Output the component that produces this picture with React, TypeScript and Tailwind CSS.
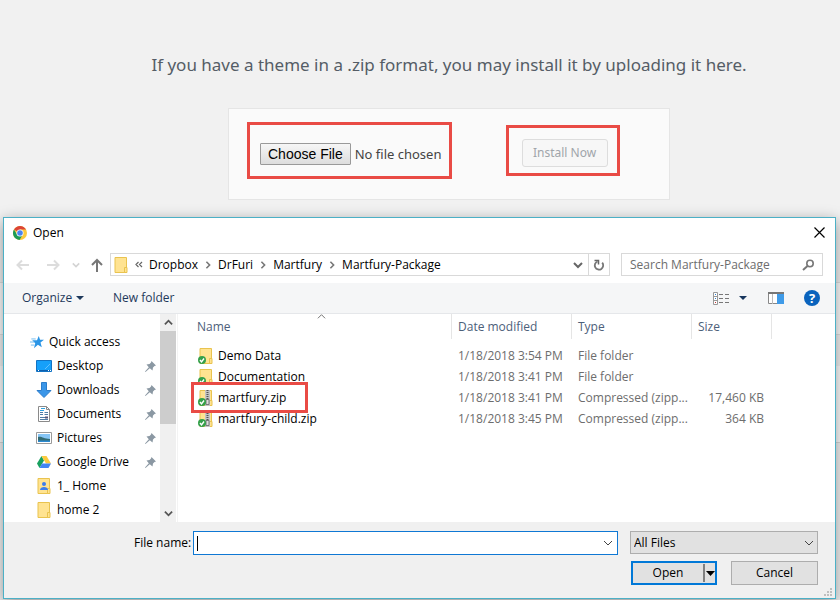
import React from "react";

const folderIcon = (
  <>
    <path d="M2 0.500h11.500v15H2z" fill="#ffe391" stroke="#e9c34f" />
    <path d="M11.500 15.500v-5h2.500v5z" fill="#ffe391" stroke="#e9c34f" />
  </>
);

function Folder({ person, badge, zip }: { person?: boolean; badge?: boolean; zip?: boolean }) {
  return (
    <svg width="16" height="16" viewBox="0 0 16 16" className="shrink-0" aria-hidden="true">
      {folderIcon}
      {person && (
        <g fill="#3b7ded">
          <circle cx="8" cy="6" r="2" />
          <path d="M4 12c0-4 8-4 8 0z" />
        </g>
      )}
      {zip && (
        <g>
          <path d="M7 0h5v16H7z" fill="#c4c4c4" />
          <path d="M9.500 0v9" stroke="#555" strokeWidth="2" strokeDasharray="1 1" />
          <path d="M8 9.500h3v5H8z" fill="#ddd" stroke="#777" />
        </g>
      )}
      {badge && (
        <g>
          <circle cx="4" cy="12" r="4" fill="#35a04a" />
          <path d="M2 12l1.500 1.800L6 10.500" fill="none" stroke="#fff" strokeWidth="1.400" />
        </g>
      )}
    </svg>
  );
}

function Chevron({ dir = "down", color = "#555", size = 9, weight = 1.5 }: { dir?: string; color?: string; size?: number; weight?: number }) {
  const d = dir === "down" ? "M1 3l4 4 4-4" : dir === "up" ? "M1 7l4-4 4 4" : "M3 1l4 4-4 4";
  return (
    <svg width={size} height={size} viewBox="0 0 10 10" className="shrink-0" aria-hidden="true">
      <path d={d} fill="none" stroke={color} strokeWidth={weight} />
    </svg>
  );
}

function Arrow({ d, color }: { d: string; color: string }) {
  return (
    <svg width="14" height="14" viewBox="0 0 14 14" aria-hidden="true">
      <path d={d} fill="none" stroke={color} strokeWidth="2" />
    </svg>
  );
}

function Pin() {
  return (
    <svg width="11" height="11" viewBox="0 0 11 11" className="shrink-0" aria-hidden="true">
      <path d="M6.500 0L11 4.500 9.500 5 8 6.500 7.500 9.500 4.800 7.200 0.500 11 0 10.500 3.800 6.200 1.500 3.500 4.500 3 6 1.500z" fill="#8b98a3" />
    </svg>
  );
}

const icons = {
  star: (
    <svg width="14" height="14" viewBox="0 0 16 16" aria-hidden="true">
      <path d="M10 1l1.500 4.500H16l-4 3 1.500 5.500-4.500-3-4.500 4 1.500-5.500L2.500 6H8z" fill="#2a95e6" />
      <path d="M1.500 4.500h5M0 8h5M1 11.500h4" stroke="#5fb4f0" />
    </svg>
  ),
  desktop: (
    <svg width="16" height="16" viewBox="0 0 16 16" aria-hidden="true">
      <path d="M0.500 2.500h15v11h-15z" fill="#16a0fa" stroke="#1273c4" />
      <path d="M1 12.500h14" stroke="#0c5fae" />
      <path d="M2 12.500h1M12 12.500h1M14 12.500h1" stroke="#fff" />
      <path d="M9 11l5-5" stroke="#62c0ff" />
    </svg>
  ),
  download: (
    <svg width="16" height="16" viewBox="0 0 16 16" aria-hidden="true">
      <path d="M5.500 0.500h5v8h4.500L8 15.500 1 8.500h4.500z" fill="#3b96e8" stroke="#2c7dcb" />
    </svg>
  ),
  document: (
    <svg width="16" height="16" viewBox="0 0 16 16" aria-hidden="true">
      <path d="M2.500 0.500h8l3 3v12h-11z" fill="#fff" stroke="#8a8a8a" />
      <path d="M10.500 0.500v3h3" fill="none" stroke="#8a8a8a" />
      <path d="M4 6.500h3M4 8.500h3M8.500 6.500h3.500M8.500 8.500h3.500M4 11.500h5M4 13.500h8" stroke="#4f7da5" />
      <path d="M5 2.500h4M4 4.500h4" stroke="#2da0e0" />
      <path d="M9 10.500h3v2H9z" fill="#557" />
    </svg>
  ),
  picture: (
    <svg width="16" height="16" viewBox="0 0 16 16" aria-hidden="true">
      <path d="M0.500 2.500h15v11h-15z" fill="#fff" stroke="#9a9a9a" />
      <path d="M2 4h12v8H2z" fill="#86c5f5" />
      <path d="M2 7c4-1 5 2 12 2v3H2z" fill="#336b73" />
      <path d="M2 10.500h12V12H2z" fill="#2c8ad0" />
    </svg>
  ),
  drive: (
    <svg width="16" height="16" viewBox="0 0 16 16" aria-hidden="true">
      <path d="M5.500 2L8 6.500 3.500 14 1 9.500z" fill="#18a15f" />
      <path d="M5.500 2h5L15 9.500h-5z" fill="#fcca3e" />
      <path d="M6 9.500h9L12.500 14h-9z" fill="#4285f4" />
    </svg>
  ),
};

const places = [
  { label: "Desktop", icon: icons.desktop, pinned: true },
  { label: "Downloads", icon: icons.download, pinned: true },
  { label: "Documents", icon: icons.document, pinned: true },
  { label: "Pictures", icon: icons.picture, pinned: true },
  { label: "Google Drive", icon: icons.drive, pinned: true },
  { label: "1_ Home", icon: <Folder person />, pinned: false },
  { label: "home 2", icon: <Folder />, pinned: false },
];

const files = [
  { name: "Demo Data", date: "1/18/2018 3:54 PM", type: "File folder", size: "", zip: false },
  { name: "Documentation", date: "1/18/2018 3:41 PM", type: "File folder", size: "", zip: false },
  { name: "martfury.zip", date: "1/18/2018 3:41 PM", type: "Compressed (zipp...", size: "17,460 KB", zip: true },
  { name: "martfury-child.zip", date: "1/18/2018 3:45 PM", type: "Compressed (zipp...", size: "364 KB", zip: true },
];

function UploadPage() {
  return (
    <main className="pt-[50px]">
      <div className="flex flex-col items-center pl-[58px]">
        <p className="font-['Noto_Sans',sans-serif] text-[17px] leading-[30px] whitespace-nowrap text-[#555d66]">
          If you have a theme in a .zip format, you may install it by uploading it here.
        </p>
        <form className="mt-7 flex h-[92px] w-[442px] items-start justify-between border border-[#e5e5e5] bg-[#fafafa] pt-[13px] pr-[49px] pl-[18px]">
          <div className="flex h-[57px] w-[205px] items-center border-3 border-[#e94b45] pt-[6px] pl-[10px]">
            <input
              type="file"
              aria-label="Theme zip file"
              className="w-full font-['Noto_Sans',sans-serif] text-[13px] leading-[22px] text-[#444] file:mr-1 file:h-[22px] file:rounded-[1px] file:border file:border-solid file:border-[#999] file:bg-linear-to-b file:from-[#f6f6f6] file:to-[#dddddd] file:px-[7px] file:font-['Liberation_Sans',sans-serif] file:text-[14px] file:leading-[20px] file:text-black"
            />
          </div>
          <div className="mt-[3px] flex h-[51px] w-[114px] items-center justify-center border-3 border-[#e94b45] pt-1 pl-[3px]">
            <button type="button" disabled className="h-7 w-[86px] rounded-[3px] border border-[#ddd] bg-[#f7f7f7] font-['Noto_Sans',sans-serif] text-[12px] whitespace-nowrap text-[#a0a5aa]">
              Install Now
            </button>
          </div>
        </form>
      </div>
      <div className="mt-[82px] h-[53px] border-y border-[#e0e0e0] bg-[#fcfcfc]" />
      <div className="mt-[31px] h-[77px] border-b border-[#d8d8d8] bg-[#fcfcfc]" />
    </main>
  );
}

function ChromeLogo() {
  return (
    <svg width="14" height="14" viewBox="0 0 14 14" aria-hidden="true">
      <circle cx="7" cy="7" r="7" fill="#fbc93d" />
      <path d="M7 7L1 3.400A7 7 0 0 1 13.100 3.600L7 3.600z" fill="#dc4437" />
      <path d="M1 3.400A7 7 0 0 0 6.500 14L9.800 8.800 4 8.500z" fill="#1b9b57" />
      <circle cx="7" cy="7" r="3.500" fill="#fff" />
      <circle cx="7" cy="7" r="2.800" fill="#4a84ee" />
    </svg>
  );
}

function NavRow() {
  return (
    <div className="flex h-[23px] items-center pr-[12px] pl-[12px]">
      <button type="button" aria-label="Back" className="w-[30px]"><Arrow d="M13 7H1.500M6 2.500L1.500 7 6 11.500" color="#dcdcdc" /></button>
      <button type="button" aria-label="Forward" className="w-[26px]"><Arrow d="M1 7h11.500M8 2.500L12.500 7 8 11.500" color="#dcdcdc" /></button>
      <button type="button" aria-label="Recent locations" className="w-[18px]"><Chevron color="#d4d4d4" size={8} weight={2} /></button>
      <button type="button" aria-label="Up" className="w-[20px]"><Arrow d="M7 14V2M2 7l5-5 5 5" color="#777" /></button>
      <div className="flex h-[23px] min-w-0 flex-1 items-center border border-[#d9d9d9] pl-[2px]">
        <Folder />
        <span className="flex w-[20px] justify-center">
          <svg width="8" height="7" viewBox="0 0 8 7" aria-hidden="true"><path d="M3.500 1L1 3.500 3.500 6M7 1L4.500 3.500 7 6" fill="none" stroke="#666" strokeWidth="1.200" /></svg>
        </span>
        <nav aria-label="Path" className="flex min-w-0 flex-1 items-center text-black">
          {["Dropbox", "DrFuri", "Martfury", "Martfury-Package"].map((name, i) => (
            <React.Fragment key={name}>
              {i > 0 && <span className="flex w-[20px] justify-center"><Chevron dir="right" color="#777" size={8} weight={2} /></span>}
              <button type="button" className="whitespace-nowrap">{name}</button>
            </React.Fragment>
          ))}
        </nav>
        <button type="button" aria-label="Previous locations" className="flex w-[20px] justify-center"><Chevron color="#666" size={10} weight={2} /></button>
        <button type="button" aria-label="Refresh" className="flex h-full w-[21px] items-center justify-center border-l border-[#d9d9d9]">
          <svg width="12" height="12" viewBox="0 0 12 12" aria-hidden="true">
            <path d="M9.200 3.700A4.200 4.200 0 1 1 4.500 2.500" fill="none" stroke="#777" strokeWidth="1.800" />
            <path d="M1.500 1.500h4v4" fill="none" stroke="#666" strokeWidth="1.500" />
          </svg>
        </button>
      </div>
      <div className="ml-[11px] flex h-[23px] w-[202px] items-center border border-[#d9d9d9] pr-[7px] pl-[8px]">
        <input type="search" aria-label="Search Martfury-Package" placeholder="Search Martfury-Package" className="min-w-0 flex-1 outline-none placeholder:text-[#6d6d6d]" />
        <svg width="13" height="12" viewBox="0 0 13 12" aria-hidden="true">
          <circle cx="8" cy="4.500" r="3.200" fill="none" stroke="#777" strokeWidth="1.600" />
          <path d="M5.500 7L1 11" stroke="#777" strokeWidth="2" />
        </svg>
      </div>
    </div>
  );
}

function Toolbar() {
  return (
    <div className="mt-[7px] flex h-[31px] items-center border-b border-[#e5e7ea] bg-[#f5f6f7] pr-[15px] pl-[18px] text-[#1e395b]">
      <button type="button" className="flex w-[91px] items-center gap-[4px]">
        Organize
        <svg width="8" height="4" viewBox="0 0 8 4" aria-hidden="true"><path d="M0 0h8L4 4z" fill="#1e395b" /></svg>
      </button>
      <button type="button" className="whitespace-nowrap">New folder</button>
      <div className="ml-auto flex items-center">
        <button type="button" aria-label="Change view">
          <svg width="17" height="13" viewBox="0 0 17 13" aria-hidden="true">
            <path d="M0.500 0.500h4v12h-4zM0.500 4.500h4M0.500 8.500h4" fill="#fff" stroke="#999" />
            <path d="M2 2.500h1M2 6.500h1" stroke="#2f7fd0" /><path d="M2 10.500h1" stroke="#c33" />
            <path d="M6 2.500h4M12 2.500h4M6 6.500h4M12 6.500h4M6 10.500h4M12 10.500h4" stroke="#777" />
          </svg>
        </button>
        <button type="button" aria-label="More views" className="ml-[9px]">
          <svg width="8" height="4" viewBox="0 0 8 4" aria-hidden="true"><path d="M0 0h8L4 4z" fill="#17365d" /></svg>
        </button>
        <button type="button" aria-label="Preview pane" className="ml-[21px]">
          <svg width="16" height="12" viewBox="0 0 16 12" aria-hidden="true">
            <path d="M0.500 0.500h15v11h-15z" fill="#fff" stroke="#888" />
            <path d="M0 1h16" stroke="#777" strokeWidth="2" />
            <path d="M4.500 2v10" stroke="#bbb" />
            <path d="M9 2h7v10H9z" fill="#3f9be8" />
          </svg>
        </button>
        <button type="button" aria-label="Help" className="ml-[20px] flex size-4 items-center justify-center rounded-full bg-[#0a63bd] text-[13px] font-bold text-white">?</button>
      </div>
    </div>
  );
}

function Sidebar() {
  return (
    <div className="flex w-[174px] shrink-0 border-r border-[#f3f3f3]">
      <ul className="w-[156px] pt-4 text-black">
        <li className="flex h-6 items-center gap-[5px] pl-[26px]">{icons.star}<a href="#quick">Quick access</a></li>
        {places.map((p) => (
          <li key={p.label} className="flex h-6 items-center pr-[4px] pl-[32px]">
            {p.icon}
            <a href="#place" className="ml-[5px] flex-1 whitespace-nowrap">{p.label}</a>
            {p.pinned && <Pin />}
          </li>
        ))}
      </ul>
      <div className="flex w-4 flex-col items-center bg-[#f0f0f0]">
        <button type="button" aria-label="Scroll up" className="flex h-[17px] items-center"><Chevron dir="up" color="#555" size={9} weight={2} /></button>
        <div className="h-[93px] w-full bg-[#cdcdcd]" />
        <button type="button" aria-label="Scroll down" className="mt-auto flex h-[17px] items-center"><Chevron color="#555" size={9} weight={2} /></button>
      </div>
    </div>
  );
}

function FileTable() {
  const head = "h-[25px] border-r border-[#e5e5e5] text-left leading-[25px] font-normal text-[#4c607a]";
  return (
    <div className="relative min-w-0 flex-1">
      <table className="w-full table-fixed border-collapse whitespace-nowrap text-[#6d6d6d]">
        <colgroup>
          <col className="w-[274px]" /><col className="w-[120px]" /><col className="w-[120px]" /><col className="w-[80px]" /><col />
        </colgroup>
        <thead>
          <tr>
            <th className="h-[31px] p-0 align-top"><div className={head + " pl-[19px]"}>Name</div></th>
            <th className="p-0 align-top"><div className={head + " pl-[6px]"}>Date modified</div></th>
            <th className="p-0 align-top"><div className={head + " pl-[6px]"}>Type</div></th>
            <th className="p-0 align-top"><div className={head + " pl-[6px]"}>Size</div></th>
            <th className="p-0" />
          </tr>
        </thead>
        <tbody>
          {files.map((f) => (
            <tr key={f.name} className="h-[21px]">
              <td className="p-0 pl-[20px] text-black"><div className="flex items-center gap-[4px]"><Folder badge zip={f.zip} />{f.name}</div></td>
              <td className="p-0 pl-[6px]">{f.date}</td>
              <td className="p-0 pl-[6px]">{f.type}</td>
              <td className="p-0 pr-[8px] text-right">{f.size}</td>
              <td className="p-0" />
            </tr>
          ))}
        </tbody>
      </table>
      <div className="absolute top-[-2px] left-[139px]"><Chevron dir="up" color="#666" size={9} weight={1} /></div>
      <div className="absolute top-[68px] left-[13px] h-[31px] w-[117px] border-3 border-[#e94b45]" />
    </div>
  );
}

function Footer() {
  return (
    <div className="relative flex-1 bg-[#f0f0f0] pt-[9px] pr-[17px] pl-[130px] text-black">
      <div className="flex">
        <label htmlFor="filename" className="w-[59px] leading-[24px] whitespace-nowrap">File name:</label>
        <div className="relative flex h-6 min-w-0 flex-1 items-center border border-[#0f78d4] bg-white pr-[4px]">
          <input id="filename" type="text" className="h-full min-w-0 flex-1 pl-1 outline-none" />
          <div className="absolute top-[4px] left-[3px] h-[15px] w-px bg-black" />
          <button type="button" aria-label="Recent file names"><Chevron color="#444" size={10} weight={1} /></button>
        </div>
        <div className="relative ml-[12px] w-[188px]">
          <select aria-label="File type" className="block h-[23px] w-full appearance-none border border-[#adadad] bg-[#e1e1e1] pl-[3px] outline-none">
            <option>All Files</option>
          </select>
          <div className="pointer-events-none absolute top-[7px] right-[4px]"><Chevron color="#444" size={10} weight={1} /></div>
        </div>
      </div>
      <div className="mt-[6px] flex justify-end gap-[14px]">
        <div className="flex h-6 w-[86px] border-2 border-[#0078d7] bg-[#e1e1e1]">
          <button type="button" className="flex-1">Open</button>
          <button type="button" aria-label="Open options" className="my-px flex w-[12px] items-center justify-center border-l-2 border-[#808080]">
            <svg width="9" height="5" viewBox="0 0 9 5" aria-hidden="true"><path d="M0 0h9L4.500 5z" fill="#000" /></svg>
          </button>
        </div>
        <button type="button" className="h-6 w-[87px] border border-[#adadad] bg-[#e1e1e1]">Cancel</button>
      </div>
      <svg width="8" height="8" viewBox="0 0 8 8" className="absolute right-[3px] bottom-[2px]" aria-hidden="true">
        <path d="M6 0h2v2H6zM3 3h2v2H3zM6 3h2v2H6zM0 6h2v2H0zM3 6h2v2H3zM6 6h2v2H6z" fill="#bfbfbf" />
      </svg>
    </div>
  );
}

export default function App() {
  return (
    <div className="relative min-h-screen overflow-hidden bg-[#f1f1f1] font-['Open_Sans','Noto_Sans',sans-serif]">
      <UploadPage />
      <section role="dialog" aria-label="Open" className="absolute top-[217px] right-1 bottom-px left-[3px] flex flex-col border border-[#4cb0c6] bg-white text-[12px] leading-[16px] shadow-[0_4px_14px_rgba(0,0,0,0.4)]">
        <header className="mb-[6px] flex h-[29px] items-center pr-[10px] pl-[9px]">
          <ChromeLogo />
          <h1 className="ml-[6px] text-black">Open</h1>
          <button type="button" aria-label="Close" className="ml-auto">
            <svg width="11" height="11" viewBox="0 0 11 11" aria-hidden="true"><path d="M0.500 0.500l10 10M10.500 0.500l-10 10" stroke="#000" strokeWidth="1.200" /></svg>
          </button>
        </header>
        <NavRow />
        <Toolbar />
        <div className="flex h-[208px]">
          <Sidebar />
          <FileTable />
        </div>
        <Footer />
      </section>
    </div>
  );
}
